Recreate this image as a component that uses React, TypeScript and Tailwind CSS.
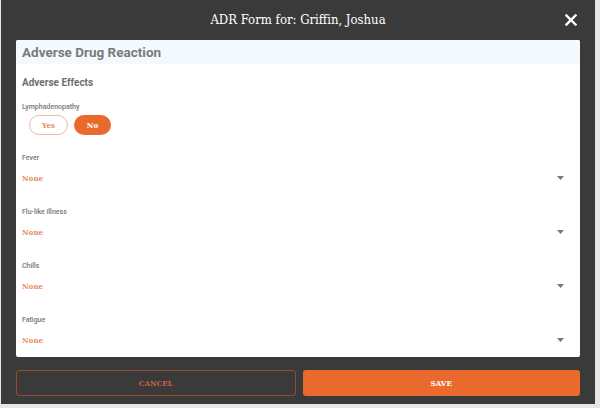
const FIELDS = ['Fever', 'Flu-like illness', 'Chills', 'Fatigue'];

const slab = "font-['DejaVu_Serif',serif] font-stretch-condensed";

function SelectField({ label }: { label: string }) {
  return (
    <div className="flex h-[54px] flex-col px-[6px]">
      <span className="text-[7px] font-medium leading-[10px] text-[#777]">{label}</span>
      <div className="mt-[9px] flex items-center justify-between pr-[8px]">
        <span className={`${slab} text-[8px] font-bold text-[#ea8d66]`}>None</span>
        <svg width="7" height="4" viewBox="0 0 7 4" className="mr-[2px]">
          <path d="M0 0h7L3.5 4z" fill="#777" />
        </svg>
      </div>
    </div>
  );
}

export default function App() {
  return (
    <div className="h-[408px] w-[600px] bg-[#e6e6e6] font-['Roboto','Liberation_Sans',sans-serif]">
      <div className="ml-[1px] flex h-[404px] w-[594px] flex-col bg-[#3a3a3a] px-[15px]">
        <div className="relative flex h-[40px] items-center justify-center">
          <span className={`${slab} text-[13px] text-white`}>ADR Form for: Griffin, Joshua</span>
          <svg
            width="12"
            height="12"
            viewBox="0 0 12 12"
            className="absolute right-[3px] top-[14px]"
          >
            <path d="M1.5 1.5l9 9M10.5 1.5l-9 9" stroke="#fff" strokeWidth="2.4" strokeLinecap="square" />
          </svg>
        </div>

        <div className="h-[317px] overflow-hidden rounded-[2px] bg-white">
          <div className="flex h-[24px] items-center bg-[#f4f9fe] px-[6px]">
            <span className="text-[13.5px] font-bold text-[#7a7a7a]">Adverse Drug Reaction</span>
          </div>
          <div className="px-[6px] pt-[11px]">
            <div className="text-[10px] font-bold text-[#6e6e6e]">Adverse Effects</div>
          </div>
          <div className="mt-[12px] px-[6px]">
            <div className="text-[7px] font-medium leading-[10px] text-[#777]">Lymphadenopathy</div>
            <div className="mt-[3px] flex gap-[6px] pl-[7px]">
              <button
                className={`${slab} h-[20px] w-[39px] rounded-full border border-[#edb9a2] bg-white text-[8px] font-bold text-[#ea8d66]`}
              >
                Yes
              </button>
              <button
                className={`${slab} h-[20px] w-[37px] rounded-full bg-[#e96a2c] text-[8px] font-bold text-white`}
              >
                No
              </button>
            </div>
          </div>
          <div className="mt-[18px]">
            {FIELDS.map((f) => (
              <SelectField key={f} label={f} />
            ))}
          </div>
        </div>

        <div className="mt-[13px] flex gap-[7px]">
          <button
            className={`${slab} h-[26px] flex-1 rounded-[3px] border border-[#9a4a2c] text-[8px] font-bold text-[#c8643a]`}
          >
            CANCEL
          </button>
          <button
            className={`${slab} h-[26px] flex-1 rounded-[3px] bg-[#e96a2c] text-[8px] font-bold text-white`}
          >
            SAVE
          </button>
        </div>
      </div>
    </div>
  );
}
